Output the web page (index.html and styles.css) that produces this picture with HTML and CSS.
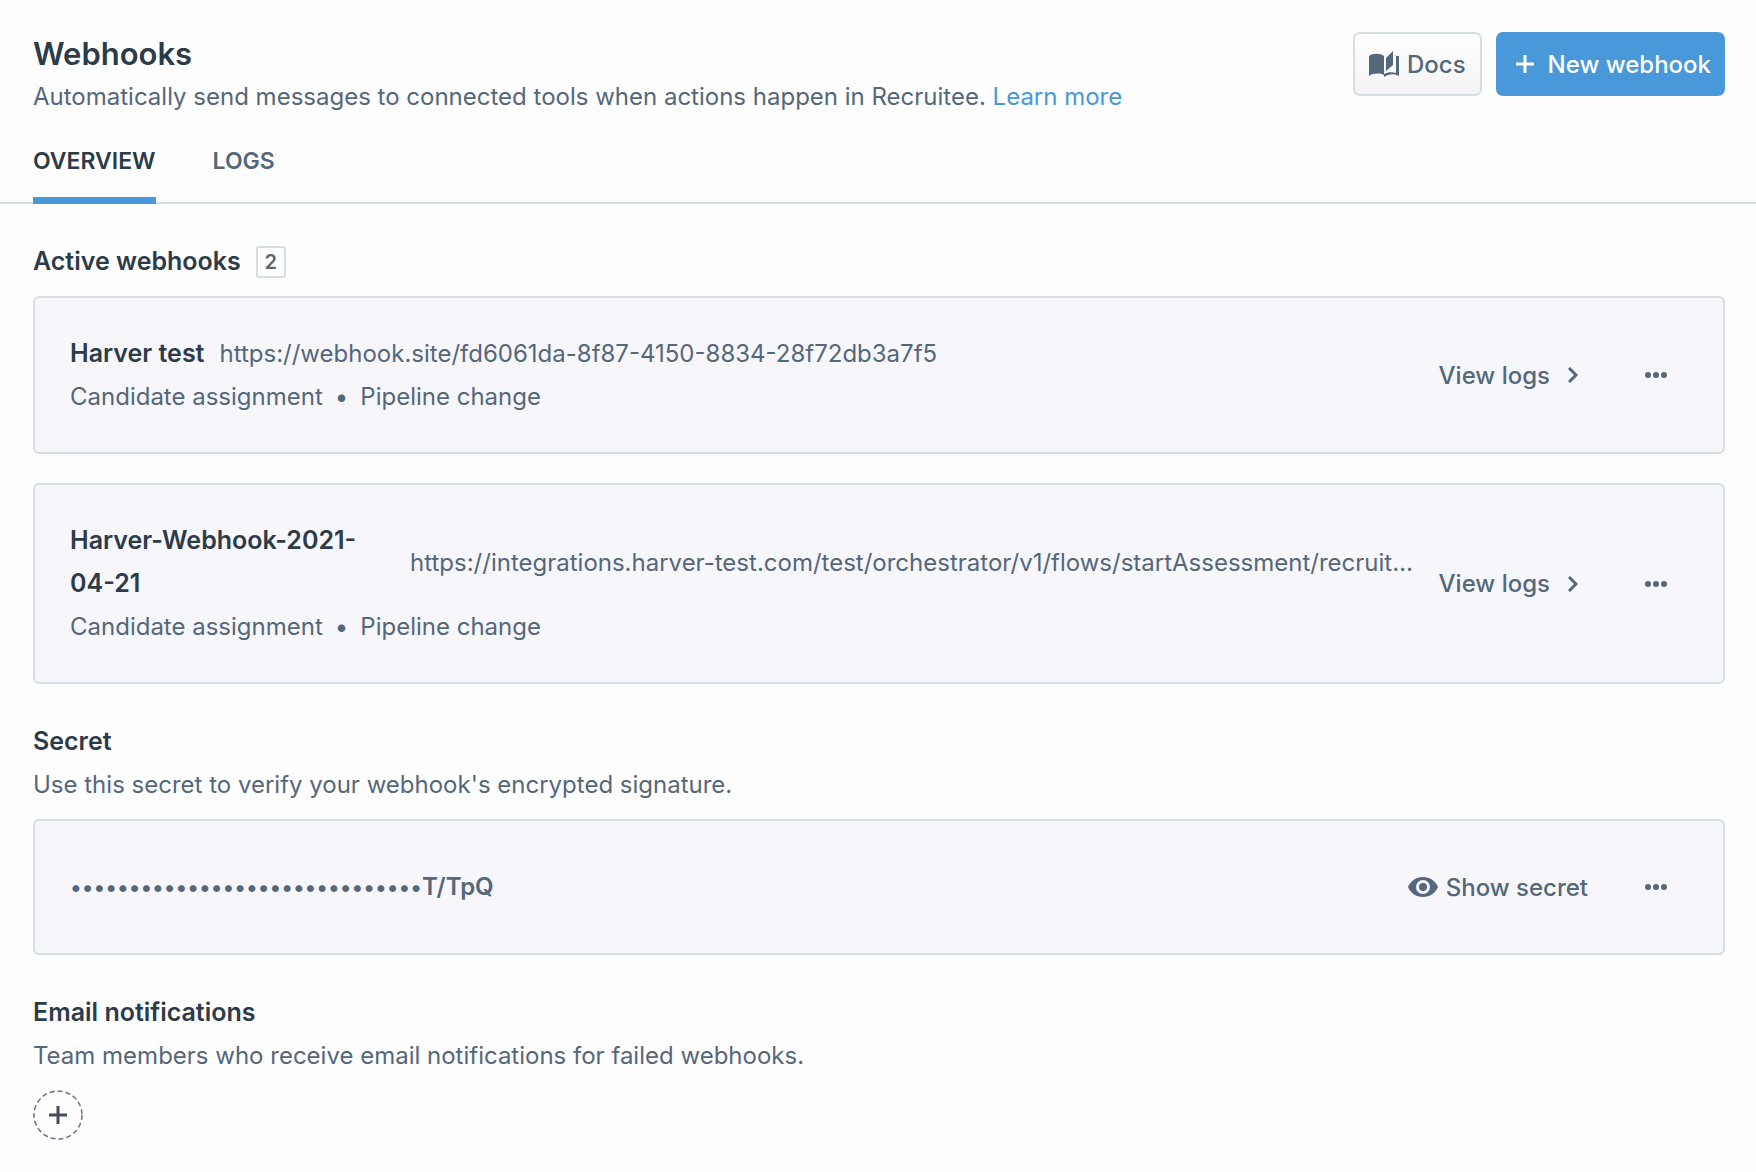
FILE: index.html
```html
<!DOCTYPE html>
<html lang="en">
<head>
    <meta charset="UTF-8">
    <meta name="viewport" content="width=device-width, initial-scale=1.0">
    <title>Webhooks</title>
    <link rel="stylesheet" href="styles.css">
</head>
<body>
    <header class="page-header">
        <div class="page-intro">
            <h1>Webhooks</h1>
            <p>Automatically send messages to connected tools when actions happen in Recruitee. <a href="#" class="learn-more">Learn more</a></p>
        </div>
        <div class="page-actions">
            <button type="button" class="btn btn-default">
                <svg class="icon-book" viewBox="0 0 30 27" aria-hidden="true">
                    <path d="M0 5C4 2 11 2 15 5V24C11 22 4 22 0 25Z" fill="currentColor"/>
                    <path d="M17 7L24 0V14L17 20Z" fill="currentColor"/>
                    <path d="M26 4L30 5V25C25 22 19 23 15 26V23C19 21 23 21 27 22V4Z" fill="currentColor"/>
                </svg>
                Docs
            </button>
            <button type="button" class="btn btn-primary">
                <svg class="icon-plus" viewBox="0 0 18 18" aria-hidden="true">
                    <path d="M9 0V18M0 9H18" stroke="currentColor" stroke-width="3"/>
                </svg>
                New webhook
            </button>
        </div>
    </header>

    <nav class="tabs">
        <a href="#" class="tab active">OVERVIEW</a>
        <a href="#" class="tab">LOGS</a>
    </nav>

    <main class="content">
        <section class="section">
            <h2>Active webhooks <span class="count">2</span></h2>
            <div class="card">
                <div class="webhook">
                    <div class="webhook-title">
                        <strong class="webhook-name">Harver test</strong>
                        <span class="webhook-url">https://webhook.site/fd6061da-8f87-4150-8834-28f72db3a7f5</span>
                    </div>
                    <div class="webhook-events"><span>Candidate assignment</span><span>•</span><span>Pipeline change</span></div>
                </div>
                <div class="card-actions">
                    <button type="button" class="btn btn-ghost btn-logs">
                        View logs
                        <svg class="icon-chevron" viewBox="0 0 10 16" aria-hidden="true">
                            <path d="M1 1L8 8L1 15" fill="none" stroke="currentColor" stroke-width="3"/>
                        </svg>
                    </button>
                    <button type="button" class="btn btn-ghost btn-menu" aria-label="More">
                        <svg class="icon-dots" viewBox="0 0 22 6" aria-hidden="true">
                            <circle cx="3" cy="3" r="3"/><circle cx="11" cy="3" r="3"/><circle cx="19" cy="3" r="3"/>
                        </svg>
                    </button>
                </div>
            </div>
            <div class="card">
                <div class="webhook">
                    <div class="webhook-title">
                        <strong class="webhook-name">Harver-Webhook-2021-04-21</strong>
                        <span class="webhook-url">https://integrations.harver-test.com/test/orchestrator/v1/flows/startAssessment/recruit…</span>
                    </div>
                    <div class="webhook-events"><span>Candidate assignment</span><span>•</span><span>Pipeline change</span></div>
                </div>
                <div class="card-actions">
                    <button type="button" class="btn btn-ghost btn-logs">
                        View logs
                        <svg class="icon-chevron" viewBox="0 0 10 16" aria-hidden="true">
                            <path d="M1 1L8 8L1 15" fill="none" stroke="currentColor" stroke-width="3"/>
                        </svg>
                    </button>
                    <button type="button" class="btn btn-ghost btn-menu" aria-label="More">
                        <svg class="icon-dots" viewBox="0 0 22 6" aria-hidden="true">
                            <circle cx="3" cy="3" r="3"/><circle cx="11" cy="3" r="3"/><circle cx="19" cy="3" r="3"/>
                        </svg>
                    </button>
                </div>
            </div>
        </section>

        <section class="section">
            <h2>Secret</h2>
            <p>Use this secret to verify your webhook's encrypted signature.</p>
            <div class="card">
                <div class="secret"><span class="secret-mask">••••••••••••••••••••••••••••••</span>T/TpQ</div>
                <div class="card-actions">
                    <button type="button" class="btn btn-ghost">
                        <svg class="icon-eye" viewBox="0 0 30 20" aria-hidden="true">
                            <path d="M15 0C8 0 2.500 4 0 10C2.500 16 8 20 15 20S27.500 16 30 10C27.500 4 22 0 15 0ZM15 17A7 7 0 1 1 15 3A7 7 0 0 1 15 17Z" fill="currentColor"/>
                            <circle cx="15" cy="10" r="4" fill="currentColor"/>
                        </svg>
                        Show secret
                    </button>
                    <button type="button" class="btn btn-ghost btn-menu" aria-label="More">
                        <svg class="icon-dots" viewBox="0 0 22 6" aria-hidden="true">
                            <circle cx="3" cy="3" r="3"/><circle cx="11" cy="3" r="3"/><circle cx="19" cy="3" r="3"/>
                        </svg>
                    </button>
                </div>
            </div>
        </section>

        <section class="section">
            <h2>Email notifications</h2>
            <p>Team members who receive email notifications for failed webhooks.</p>
            <button type="button" class="add-member" aria-label="Add team member">
                <svg viewBox="0 0 50 50" aria-hidden="true">
                    <circle cx="25" cy="25" r="24" fill="none" stroke="#66758a" stroke-width="1.500" stroke-dasharray="5 3"/>
                    <path d="M25 16V34M16 25H34" stroke="#434d5d" stroke-width="3"/>
                </svg>
            </button>
        </section>
    </main>
</body>
</html>
```
FILE: styles.css
```css
* {
    box-sizing: border-box;
}
body {
    margin: 0;
    background: #fefefe;
    color: #55677a;
    font-family: Inter, "Liberation Sans", sans-serif;
    font-size: 24px;
    line-height: 43px;
}
h1, h2, p {
    margin: 0;
}
h1 {
    color: #2d3b48;
    font-size: 31px;
    font-weight: 600;
    line-height: 43px;
}
h2 {
    display: flex;
    align-items: center;
    gap: 15px;
    color: #2d3b48;
    font-size: 25px;
    font-weight: 600;
}
.page-header {
    display: flex;
    justify-content: space-between;
    align-items: flex-start;
    padding: 32px 31px 0 33px;
}
.learn-more {
    color: #4898da;
    text-decoration: none;
}
.page-actions {
    display: flex;
    gap: 14px;
}
.btn {
    display: flex;
    align-items: center;
    gap: 8px;
    height: 64px;
    padding: 0 14px;
    border: 2px solid transparent;
    border-radius: 7px;
    background: none;
    color: #55677a;
    font-family: inherit;
    font-size: 24px;
    font-weight: 500;
    white-space: nowrap;
    cursor: pointer;
}
.btn-default {
    border-color: #d3dfe3;
    background: linear-gradient(#fefefe, #f4f4f5);
}
.btn-primary {
    gap: 14px;
    padding: 0 12px 0 18px;
    background: #4898da;
    border-color: #4898da;
    color: #fff;
}
.icon-book {
    width: 30px;
    height: 27px;
}
.icon-plus {
    width: 18px;
    height: 18px;
}
.tabs {
    display: flex;
    gap: 57px;
    margin-top: 22px;
    padding: 0 33px;
    border-bottom: 2px solid #d3dfe3;
}
.tab {
    margin-bottom: -2px;
    padding-bottom: 14px;
    border-bottom: 7px solid transparent;
    color: #55677a;
    font-size: 23px;
    font-weight: 600;
    text-decoration: none;
}
.tab.active {
    border-color: #4898da;
    color: #2d3b48;
}
.content {
    padding: 36px 31px 0 33px;
}
.section {
    margin-bottom: 36px;
}
.count {
    min-width: 30px;
    border: 2px solid #d3dfe3;
    border-radius: 3px;
    color: #55677a;
    font-size: 20px;
    font-weight: 600;
    line-height: 28px;
    text-align: center;
}
.card {
    display: flex;
    justify-content: space-between;
    align-items: center;
    margin-top: 13px;
    padding: 34px 35px;
    border: 2px solid #d3dfe3;
    border-radius: 6px;
    background: #f6f6fb;
}
.card + .card {
    margin-top: 29px;
}
.webhook {
    flex: 1;
    min-width: 0;
}
.webhook-title {
    display: flex;
    align-items: center;
    gap: 15px;
}
.webhook-name {
    flex: none;
    max-width: 325px;
    color: #2d3b48;
    font-size: 25px;
    font-weight: 600;
}
.webhook-url {
    overflow: hidden;
    text-overflow: ellipsis;
    white-space: nowrap;
}
.webhook-events {
    display: flex;
    gap: 12px;
}
.card-actions {
    display: flex;
    flex: none;
    align-items: center;
    gap: 18px;
}
.btn-ghost {
    padding: 0 16px;
}
.btn-logs {
    gap: 18px;
    padding-right: 26px;
}
.btn-menu {
    justify-content: center;
    width: 64px;
    padding: 0;
}
.icon-chevron {
    width: 10px;
    height: 16px;
}
.icon-dots {
    width: 22px;
    height: 6px;
    fill: currentColor;
}
.icon-eye {
    width: 30px;
    height: 20px;
}
.secret {
    font-weight: 600;
}
.secret-mask {
    font-size: 22px;
    font-weight: 500;
}
.add-member {
    display: block;
    width: 50px;
    height: 50px;
    margin-top: 13px;
    padding: 0;
    border: 0;
    background: none;
    cursor: pointer;
}
.add-member svg {
    display: block;
}
```
